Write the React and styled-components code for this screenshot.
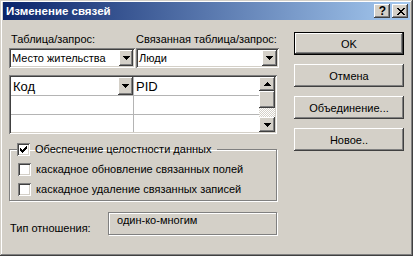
import React from 'react';
import styled, { createGlobalStyle, css } from 'styled-components';

const Global = createGlobalStyle`
  html, body { margin: 0; padding: 0; background: #D4D0C8; }
  body { font-family: "Liberation Sans", Arial, sans-serif; font-size: 11px; color: #000; }
  * { box-sizing: border-box; }
`;

const raised = css`
  background: #D4D0C8;
  box-shadow: inset -1px -1px #404040, inset 1px 1px #fff, inset -2px -2px #808080, inset 2px 2px #D4D0C8;
`;

const sunken = css`
  box-shadow: inset 1px 1px #808080, inset -1px -1px #fff, inset 2px 2px #404040, inset -2px -2px #D4D0C8;
`;

const Window = styled.div`
  width: 413px;
  height: 256px;
  display: flex;
  flex-direction: column;
  padding: 2px 3px 3px 3px;
  background: #D4D0C8;
  box-shadow: inset -1px -1px #404040, inset 1px 1px #D4D0C8, inset -2px -2px #808080, inset 2px 2px #fff;
`;

const TitleBar = styled.div`
  height: 18px;
  display: flex;
  align-items: center;
  padding: 0 2px 0 2px;
  background: linear-gradient(to right, #0A246A, #A6CAF0);
`;

const TitleText = styled.span`
  color: #fff;
  font-weight: bold;
  font-size: 11.5px;
  padding-left: 1px;
`;

const TitleButtons = styled.div`
  margin-left: auto;
  display: flex;
  gap: 2px;
`;

const TitleButton = styled.div`
  width: 16px;
  height: 14px;
  ${raised};
  display: flex;
  align-items: center;
  justify-content: center;
  font-weight: bold;
  font-size: 12px;
  line-height: 14px;
  padding-left: 1px;
`;

const Body = styled.div`
  flex: 1;
  display: flex;
  gap: 17px;
  padding: 12px 5px 0 6px;
`;

const LeftColumn = styled.div`
  width: 268px;
  display: flex;
  flex-direction: column;
`;

const PairRow = styled.div`
  width: 270px;
  display: grid;
  grid-template-columns: 126px 143px;
  column-gap: 1px;
  margin-top: ${p => p.$mt || 0}px;
`;

const Label = styled.div`
  height: 13px;
  line-height: 13px;
  padding-left: ${p => p.$pl || 0}px;
  white-space: nowrap;
`;

const Combo = styled.div`
  height: 20px;
  background: #fff;
  ${sunken};
  display: flex;
  align-items: center;
  padding: 2px;
`;

const ComboText = styled.span`
  padding-left: 1px;
  white-space: nowrap;
`;

const ArrowButton = styled.div`
  width: ${p => p.$w || 14}px;
  height: ${p => p.$h || 16}px;
  margin-left: auto;
  flex-shrink: 0;
  ${raised};
  display: flex;
  align-items: center;
  justify-content: center;
`;

const Triangle = ({ up }) => (
  <svg width="7" height="4" viewBox="0 0 7 4" shapeRendering="crispEdges">
    <path d={up ? 'M3 0h1v1h1v1h1v1h1v1H0V3h1V2h1V1h1z' : 'M0 0h7v1H6v1H5v1H4v1H3V3H2V2H1V1H0z'} fill="#000" />
  </svg>
);

const Grid = styled.div`
  margin-top: 7px;
  width: 268px;
  height: 59px;
  background: #fff;
  ${sunken};
  padding: 2px;
  display: flex;
`;

const Cells = styled.div`
  flex: 1;
  display: grid;
  grid-template-columns: 123px 1fr;
  grid-auto-rows: 19px;
  overflow: hidden;
`;

const Cell = styled.div`
  border-bottom: 1px solid #B4B4B4;
  border-right: ${p => (p.$first ? '1px solid #B4B4B4' : 'none')};
  display: flex;
  align-items: center;
  font-size: 13px;
  padding-left: 2px;
  white-space: nowrap;
`;

const ScrollBar = styled.div`
  width: 16px;
  display: flex;
  flex-direction: column;
`;

const ScrollButton = styled.div`
  height: ${p => p.$h}px;
  ${raised};
  display: flex;
  align-items: center;
  justify-content: center;
`;

const Track = styled.div`
  flex: 1;
  background: repeating-conic-gradient(#fff 0 25%, #D4D0C8 0 50%) 0 0 / 2px 2px;
`;

const Group = styled.fieldset`
  margin: 7px 0 0 0;
  padding: 2px 0 1px 7px;
  min-inline-size: 0;
  border: 1px solid #808080;
  box-shadow: 1px 1px 0 #fff, inset 1px 1px 0 #fff;
`;

const Legend = styled.legend`
  padding: 0 6px 0 0;
  height: 16px;
  display: flex;
  align-items: center;
`;

const CheckRow = styled.div`
  height: 20px;
  display: flex;
  align-items: center;
  padding-left: ${p => p.$pl || 0}px;
`;

const Box = styled.span`
  width: 13px;
  height: 13px;
  background: #fff;
  ${sunken};
  display: flex;
  align-items: center;
  justify-content: center;
  margin-right: 5px;
  flex-shrink: 0;
`;

const CheckText = styled.span`
  white-space: nowrap;
`;

const TypeRow = styled.div`
  margin-top: 11px;
  display: flex;
  align-items: flex-end;
`;

const TypeLabel = styled.div`
  line-height: 13px;
  padding-left: 1px;
`;

const TypeBox = styled.div`
  margin-left: auto;
  width: 169px;
  height: 23px;
  border: 1px solid #808080;
  box-shadow: 1px 1px 0 #fff, inset 1px 1px 0 #fff;
  padding: 1px 8px;
  line-height: 13px;
`;

const RightColumn = styled.div`
  display: flex;
  flex-direction: column;
  gap: 9px;
`;

const Button = styled.div`
  width: 110px;
  height: 23px;
  display: flex;
  align-items: center;
  justify-content: center;
  ${raised};
  ${p => p.$default && css`
    box-shadow: inset 0 0 0 1px #000, inset -2px -2px #404040, inset 2px 2px #fff, inset -3px -3px #808080;
  `}
`;

const Check = () => (
  <svg width="7" height="7" viewBox="0 0 7 7" shapeRendering="crispEdges">
    <path d="M6 0h1v3H6v1H5v1H4v1H3v1H2V6H1V5H0V2h1v1h1v1h1V3h1V2h1V1h1z" fill="#000" />
  </svg>
);

const CloseIcon = () => (
  <svg width="8" height="7" viewBox="0 0 8 7" shapeRendering="crispEdges">
    <path d="M0 0h2v1h1v1h2V1h1V0h2v1H7v1H6v1H5v1h1v1h1v1h1v1H6V6H5V5H3v1H2v1H0V6h1V5h1V4h1V3H2V2H1V1H0z" fill="#000" />
  </svg>
);

export default function App() {
  return (
    <>
      <Global />
      <Window>
        <TitleBar>
          <TitleText>Изменение связей</TitleText>
          <TitleButtons>
            <TitleButton>?</TitleButton>
            <TitleButton><CloseIcon /></TitleButton>
          </TitleButtons>
        </TitleBar>
        <Body>
          <LeftColumn>
            <PairRow $mt={1}>
              <Label $pl={2}>Таблица/запрос:</Label>
              <Label>Связанная таблица/запрос:</Label>
            </PairRow>
            <PairRow $mt={2}>
              <Combo>
                <ComboText>Место жительства</ComboText>
                <ArrowButton><Triangle /></ArrowButton>
              </Combo>
              <Combo>
                <ComboText>Люди</ComboText>
                <ArrowButton $w={15}><Triangle /></ArrowButton>
              </Combo>
            </PairRow>
            <Grid>
              <Cells>
                <Cell $first>
                  Код
                  <ArrowButton $w={15} $h={18}><Triangle /></ArrowButton>
                </Cell>
                <Cell>PID</Cell>
                <Cell $first />
                <Cell />
                <Cell $first />
                <Cell />
              </Cells>
              <ScrollBar>
                <ScrollButton $h={14}><Triangle up /></ScrollButton>
                <ScrollButton $h={17} />
                <Track />
                <ScrollButton $h={15}><Triangle /></ScrollButton>
              </ScrollBar>
            </Grid>
            <Group>
              <Legend>
                <Box><Check /></Box>
                <CheckText>Обеспечение целостности данных</CheckText>
              </Legend>
              <CheckRow $pl={1}>
                <Box />
                <CheckText>каскадное обновление связанных полей</CheckText>
              </CheckRow>
              <CheckRow $pl={1}>
                <Box />
                <CheckText>каскадное удаление связанных записей</CheckText>
              </CheckRow>
            </Group>
            <TypeRow>
              <TypeLabel>Тип отношения:</TypeLabel>
              <TypeBox>один-ко-многим</TypeBox>
            </TypeRow>
          </LeftColumn>
          <RightColumn>
            <Button $default>OK</Button>
            <Button>Отмена</Button>
            <Button>Объединение...</Button>
            <Button>Новое..</Button>
          </RightColumn>
        </Body>
      </Window>
    </>
  );
}
